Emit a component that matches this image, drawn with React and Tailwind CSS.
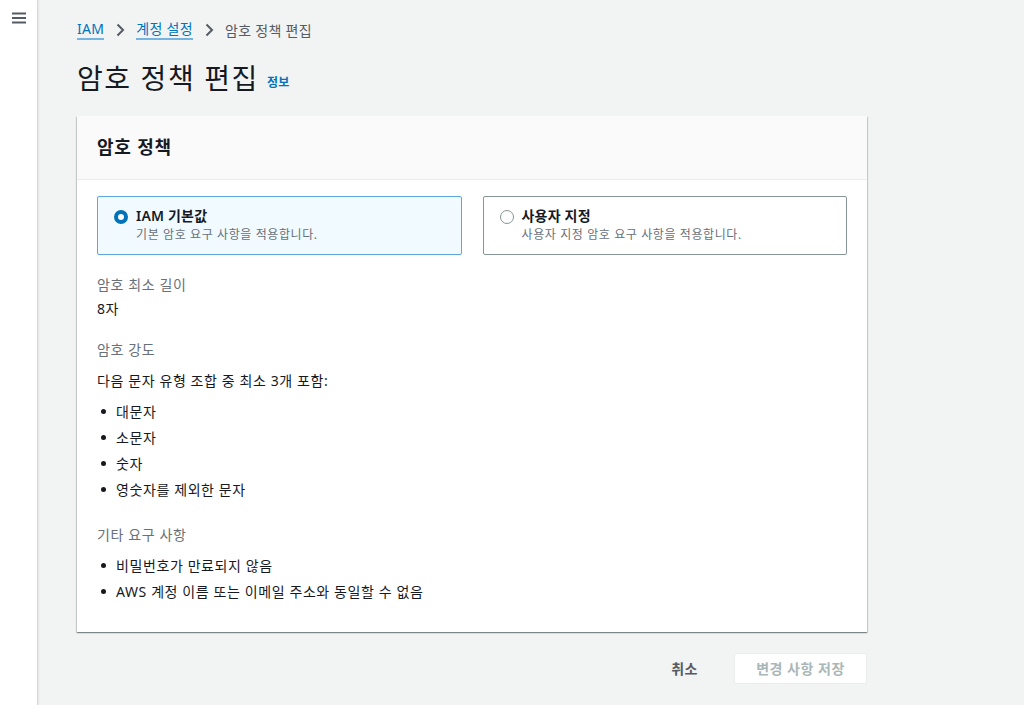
import React, { useState } from 'react';

const font = { fontFamily: '"Noto Sans", "Noto Sans CJK KR", sans-serif' };

const Chevron = () => (
  <svg width="16" height="16" viewBox="0 0 16 16" className="mx-[8px] text-[#545b64]">
    <path d="M5.5 2.5 11 8l-5.5 5.5" fill="none" stroke="currentColor" strokeWidth="2" />
  </svg>
);

const RadioTile = ({ checked, label, desc, onClick }) => (
  <button
    onClick={onClick}
    className={`flex-1 h-[59px] rounded-[2px] border text-left flex items-start px-[16px] pt-[9px] ${
      checked ? 'bg-[#f1faff] border-[#5ea9da]' : 'bg-white border-[#879596]'
    }`}
  >
    <span
      className={`mt-[4px] w-[14px] h-[14px] rounded-full shrink-0 ${
        checked ? 'border-[4px] border-[#0073bb] bg-white' : 'border-[1.5px] border-[#879596] bg-white'
      }`}
    />
    <span className="ml-[8px] flex flex-col">
      <span className="text-[14px] leading-[20px] font-semibold text-[#16191f] tracking-[0.2px]">{label}</span>
      <span className="text-[12px] leading-[18px] text-[#687078] tracking-[0.6px]">{desc}</span>
    </span>
  </button>
);

const Bullets = ({ items }) => (
  <ul className="mt-[6px] flex flex-col">
    {items.map((t) => (
      <li key={t} className="flex items-center h-[26px] text-[14px] text-[#16191f] tracking-[0.6px]">
        <span className="w-[5px] h-[5px] rounded-full bg-[#16191f] ml-[4px] mr-[10px]" />
        {t}
      </li>
    ))}
  </ul>
);

export default function App() {
  const [mode, setMode] = useState('default');
  return (
    <div className="w-[1024px] h-[705px] flex bg-[#f2f3f3] overflow-hidden" style={font}>
      <div className="w-[38px] h-full bg-white border-r border-[#d5dbdb] shadow-[1px_0_2px_rgba(0,0,0,0.06)] flex justify-center pt-[12px]">
        <svg width="14" height="12" viewBox="0 0 14 12">
          <path d="M0 1.5h14M0 6h14M0 10.5h14" stroke="#545b64" strokeWidth="2" />
        </svg>
      </div>

      <div className="flex-1 pl-[39px]">
        <div className="w-[790px]">
          <nav className="flex items-center h-[20px] mt-[20px] text-[14px] tracking-[0.3px]">
            <a className="text-[#0073bb] border-b-2 border-[#73b4e0] leading-[18px]">IAM</a>
            <Chevron />
            <a className="text-[#0073bb] border-b-2 border-[#73b4e0] leading-[18px]">계정 설정</a>
            <Chevron />
            <span className="text-[#545b64]">암호 정책 편집</span>
          </nav>

          <div className="flex items-end mt-[20px] h-[36px]">
            <h1 className="text-[28px] leading-[36px] text-[#16191f] font-normal tracking-[1.6px]">암호 정책 편집</h1>
            <a className="ml-[8px] mb-[4px] text-[12px] font-semibold text-[#0073bb] tracking-[0.3px]">정보</a>
          </div>

          <div className="mt-[20px] bg-white shadow-[0_1px_1px_rgba(0,28,36,0.3),1px_1px_1px_rgba(0,28,36,0.15),-1px_1px_1px_rgba(0,28,36,0.15)]">
            <div className="h-[64px] bg-[#fafafa] border-b border-[#eaeded] flex items-center px-[20px]">
              <h2 className="text-[18px] font-bold text-[#16191f] tracking-[0.8px]">암호 정책</h2>
            </div>

            <div className="px-[20px] pt-[16px] pb-[28px]">
              <div className="flex gap-[21px]">
                <RadioTile
                  checked={mode === 'default'}
                  label="IAM 기본값"
                  desc="기본 암호 요구 사항을 적용합니다."
                  onClick={() => setMode('default')}
                />
                <RadioTile
                  checked={mode === 'custom'}
                  label="사용자 지정"
                  desc="사용자 지정 암호 요구 사항을 적용합니다."
                  onClick={() => setMode('custom')}
                />
              </div>

              <div className="mt-[19px] tracking-[0.6px]">
                <div className="text-[14px] leading-[22px] text-[#687078]">암호 최소 길이</div>
                <div className="mt-[2px] text-[14px] leading-[22px] text-[#16191f]">8자</div>
              </div>

              <div className="mt-[19px] tracking-[0.6px]">
                <div className="text-[14px] leading-[22px] text-[#687078]">암호 강도</div>
                <div className="mt-[9px] text-[14px] leading-[22px] text-[#16191f]">다음 문자 유형 조합 중 최소 3개 포함:</div>
                <Bullets items={['대문자', '소문자', '숫자', '영숫자를 제외한 문자']} />
              </div>

              <div className="mt-[22px] tracking-[0.6px]">
                <div className="text-[14px] leading-[22px] text-[#687078]">기타 요구 사항</div>
                <Bullets items={['비밀번호가 만료되지 않음', 'AWS 계정 이름 또는 이메일 주소와 동일할 수 없음']} />
              </div>
            </div>
          </div>

          <div className="flex justify-end items-center mt-[21px] gap-[16px]">
            <button className="px-[20px] h-[30px] text-[14px] font-bold text-[#545b64] tracking-[0.5px]">취소</button>
            <button className="w-[133px] h-[31px] bg-white border border-[#eaeded] rounded-[2px] text-[14px] font-bold text-[#aab7b8] tracking-[0.5px]">
              변경 사항 저장
            </button>
          </div>
        </div>
      </div>
    </div>
  );
}
